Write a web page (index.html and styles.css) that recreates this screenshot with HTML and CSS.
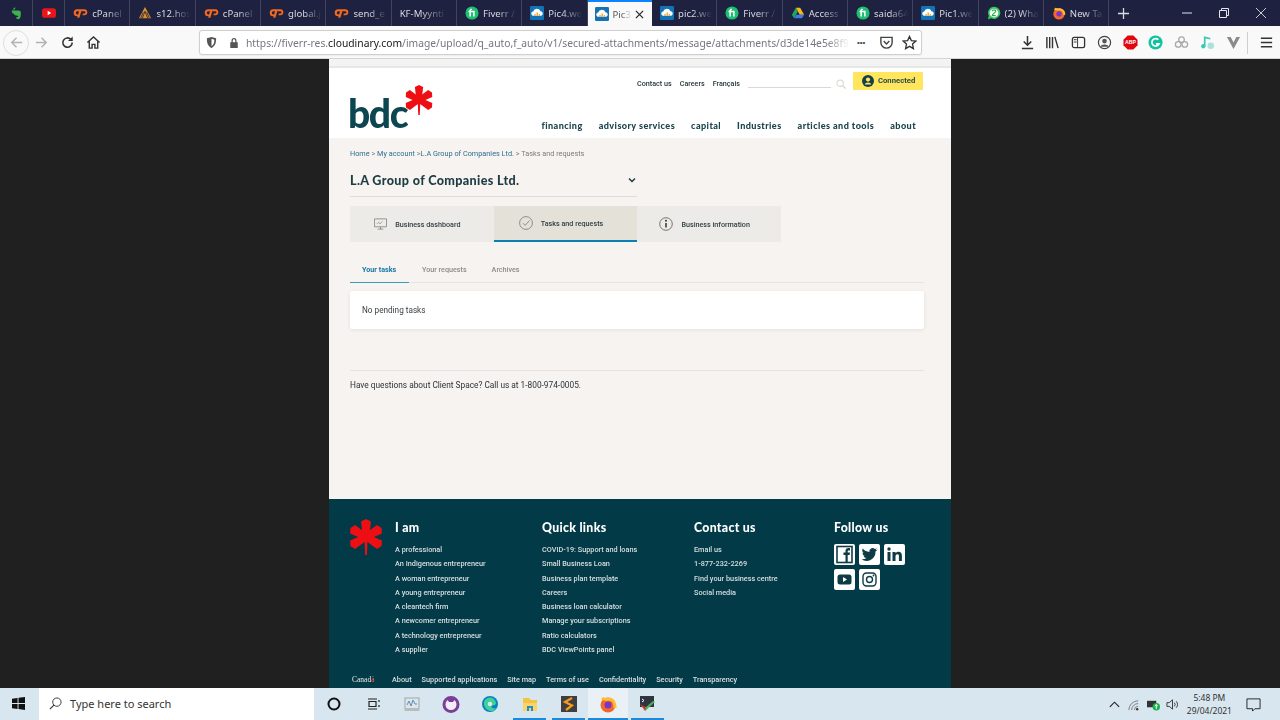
FILE: index.html
```html
<!DOCTYPE html>
<html lang="en">
<head>
<meta charset="utf-8">
<title>Client Space</title>
<link rel="stylesheet" href="styles.css">
</head>
<body>
<svg class="defs" width="0" height="0" aria-hidden="true">
  <defs>
    <symbol id="cp" viewBox="0 0 16 12"><path d="M7 2H4.500a3.600 3.600 0 0 0 0 7.500H6l.8-2H4.700a1.700 1.700 0 0 1 0-3.500H6.400L4.500 11h2.300l2.700-9zM9.500 2H12a3.200 3.200 0 0 1 0 6.500H10l.6-2h1.400a1.200 1.200 0 0 0 0-2.500H9z" fill="#f26a21"/></symbol>
    <symbol id="fv" viewBox="0 0 16 16"><circle cx="8" cy="8" r="7.500" fill="#1dbf73"/><path d="M5 12V7H4V5.500h1V5c0-1.500 1-2 2.500-2H8v1.500h-.4c-.7 0-.8.300-.8 1h4.200V12H9.300V7H6.800v5z" fill="#fff"/></symbol>
    <symbol id="pc" viewBox="0 0 16 16"><rect width="16" height="16" rx="1.500" fill="#1273b5"/><path d="M3 11a2.500 2.500 0 0 1 .6-4.800A4.500 4.500 0 0 1 12 6a2.600 2.600 0 0 1 1 5z" fill="#fff"/><path d="M5 11V9h1.500v2zM7.500 11V7.500H9V11zM10 11V9h1.300v2z" fill="#f0a020"/></symbol>
    <symbol id="star" viewBox="-16 -16 32 32">
      <g fill="#ee0f14">
        <circle r="4.500"/>
        <path d="M-2.800 0L-4.400-13.800 0-16 4.400-13.800 2.800 0z"/>
        <path transform="rotate(60)" d="M-2.800 0L-4.400-13.800 0-16 4.400-13.800 2.800 0z"/>
        <path transform="rotate(120)" d="M-2.800 0L-4.400-13.800 0-16 4.400-13.800 2.800 0z"/>
        <path transform="rotate(-60)" d="M-2.800 0L-4.400-13.800 0-16 4.400-13.800 2.800 0z"/>
        <path transform="rotate(-120)" d="M-2.800 0L-4.400-13.800 0-16 4.400-13.800 2.800 0z"/>
        <path d="M-1.500 0L-.8 16H.8L1.500 0z"/>
      </g>
    </symbol>
  </defs>
</svg>

<div class="tabstrip">
  <div class="tab tab-mini"><svg class="fav" viewBox="0 0 16 16"><path d="M4 4l3-3v3zM5 5h6c2 0 2.500 1 2.500 3 0 4-.5 7-3 7-2 0-2.500-1-2-2.500H10c.8 0 .8-1.500-.2-1.500-2 0-4-.5-4.500-2.500L4 8.500 3 5z" fill="#3fb24f"/></svg></div>
  <div class="tab tab-mini"><svg class="fav" viewBox="0 0 16 16"><rect y="2.500" width="16" height="11" rx="3" fill="#e8161b"/><path d="M6.500 5.500v5l4-2.500z" fill="#fff"/></svg></div>
  <div class="tab"><svg class="fav fav-w"><use href="#cp"/></svg><span class="tl">cPanel</span></div>
  <div class="tab"><svg class="fav" viewBox="0 0 16 16"><path d="M1 14L8 1l7 13z" fill="#e0902c"/><path d="M5 14l3-8 3 8M3 14l3-7M13 14l-3-7" stroke="#2a2a40" fill="none"/></svg><span class="tl">s12.hos</span></div>
  <div class="tab"><svg class="fav fav-w"><use href="#cp"/></svg><span class="tl">cPanel</span></div>
  <div class="tab"><svg class="fav fav-w"><use href="#cp"/></svg><span class="tl">global.j</span></div>
  <div class="tab"><svg class="fav fav-w"><use href="#cp"/></svg><span class="tl">send_e</span></div>
  <div class="tab tab-plain"><span class="tl tl-long">KF-Myynti (</span></div>
  <div class="tab"><svg class="fav"><use href="#fv"/></svg><span class="tl">Fiverr /</span></div>
  <div class="tab"><svg class="fav"><use href="#pc"/></svg><span class="tl">Pic4.we</span></div>
  <div class="tab tab-active"><svg class="fav"><use href="#pc"/></svg><span class="tl tl-short">Pic3</span><svg class="tabx" viewBox="0 0 10 10"><path d="M1 1l8 8M9 1l-8 8" stroke="#222" stroke-width="1.300"/></svg></div>
  <div class="tab"><svg class="fav"><use href="#pc"/></svg><span class="tl">pic2.we</span></div>
  <div class="tab"><svg class="fav"><use href="#fv"/></svg><span class="tl">Fiverr /</span></div>
  <div class="tab"><svg class="fav" viewBox="0 0 16 16"><path d="M5.500 2h5L15 10h-5z" fill="#f5b916"/><path d="M5.500 2L1 10l2.500 4L8 6z" fill="#1fa463"/><path d="M3.500 14h9L15 10H6z" fill="#3a7de8"/></svg><span class="tl">Access</span></div>
  <div class="tab"><svg class="fav"><use href="#fv"/></svg><span class="tl">saida64</span></div>
  <div class="tab"><svg class="fav"><use href="#pc"/></svg><span class="tl">Pic1.we</span></div>
  <div class="tab"><svg class="fav" viewBox="0 0 16 16"><path d="M1 15l1-4a7 7 0 1 1 3 3z" fill="#35c85a"/><circle cx="8" cy="8" r="5" fill="#fff"/><path d="M6 6c0-2 4-2 4 0 0 1.500-4 3-4 5h4" stroke="#2aa84a" stroke-width="1.300" fill="none"/></svg><span class="tl">(2) Wha</span></div>
  <div class="tab"><svg class="fav" viewBox="0 0 16 16"><circle cx="8" cy="9" r="6.500" fill="#f2682a"/><path d="M3 3c2 2 5 0 7 1 3 1 4 4 4 6" stroke="#ffbd2e" stroke-width="2.500" fill="none"/><circle cx="8" cy="9" r="3" fill="#7a35c9"/></svg><span class="tl">New Ta</span></div>
  <div class="newtab"><svg class="win-ic" viewBox="0 0 12 12"><path d="M6 0v12M0 6h12" stroke="#d9dae0" stroke-width="1.400"/></svg></div>
  <div class="winctl">
    <svg class="win-ic-s" viewBox="0 0 10 10"><path d="M0 5h10" stroke="#e4e4ea"/></svg>
    <svg class="win-ic-s" viewBox="0 0 10 10"><path d="M.5 2.500h7v7h-7zM2.500 2.500v-2h7v7h-2" stroke="#e4e4ea" fill="none"/></svg>
    <svg class="win-ic-s" viewBox="0 0 10 10"><path d="M0 0l10 10M10 0L0 10" stroke="#c9cad2"/></svg>
  </div>
</div>

<div class="toolbar">
  <div class="navbtns">
    <span class="backbtn"><svg class="tb" viewBox="0 0 16 16"><path d="M14 8H3M8 3L3 8l5 5" stroke="#b4b4b8" stroke-width="1.600" fill="none"/></svg></span>
    <svg class="tb fwd" viewBox="0 0 16 16"><path d="M2 8h11M8 3l5 5-5 5" stroke="#b4b4b8" stroke-width="1.600" fill="none"/></svg>
    <svg class="tb rel" viewBox="0 0 16 16"><path d="M13 8a5 5 0 1 1-1.500-3.500L13 6" stroke="#333" stroke-width="1.700" fill="none"/><path d="M13.500 1.500v5h-5z" fill="#333"/></svg>
    <svg class="tb home" viewBox="0 0 16 16"><path d="M1.500 8L8 2l6.500 6M3.500 7v7h3v-4h3v4h3V7" stroke="#333" stroke-width="1.500" fill="none"/></svg>
  </div>
  <div class="urlbar">
    <svg class="ub-shield" viewBox="0 0 14 14"><path d="M7 1l5 1.500c0 5-1 8.500-5 10.500C3 11 2 7.500 2 2.500zM7 3v8c2.300-1.500 3-3.500 3.100-7z" fill="#555" fill-rule="evenodd"/></svg>
    <span class="ub-sep"></span>
    <svg class="ub-lock" viewBox="0 0 12 14"><path d="M3 6V4a3 3 0 0 1 6 0v2h1.500v7h-9V6zm1.500 0h3V4a1.500 1.500 0 0 0-3 0z" fill="#555" fill-rule="evenodd"/></svg>
    <span class="url">https://fiverr-res.<b>cloudinary.com</b>/image/upload/q_auto,f_auto/v1/secured-attachments/message/attachments/d3de14e5e8f9</span>
    <span class="dots">•••</span>
    <svg class="tb" viewBox="0 0 16 16"><path d="M2 2.500h12V8a6 6 0 0 1-12 0z" stroke="#444" stroke-width="1.500" fill="none"/><path d="M5 6.500L8 9.500l3-3" stroke="#444" stroke-width="1.500" fill="none"/></svg>
    <svg class="tb star-ic" viewBox="0 0 16 16"><path d="M8 1.500l2 4.500 4.800.5-3.600 3.200 1 4.800L8 12.100 3.800 14.500l1-4.800L1.200 6.500 6 6z" stroke="#333" stroke-width="1.400" fill="none"/></svg>
  </div>
  <div class="tools">
    <svg class="tb" viewBox="0 0 16 16"><path d="M8 1v9M4 7l4 4 4-4M2 14.500h12" stroke="#333" stroke-width="1.600" fill="none"/></svg>
    <svg class="tb" viewBox="0 0 16 16"><path d="M2 2v12M5 2v12M8 2v12M10.500 2l3.500 12" stroke="#333" stroke-width="1.500" fill="none"/></svg>
    <svg class="tb" viewBox="0 0 16 16"><rect x="1.500" y="2.500" width="13" height="11" rx="2" stroke="#333" stroke-width="1.400" fill="none"/><path d="M3 5h3M3 7.500h3M7 3v10" stroke="#333"/></svg>
    <svg class="tb" viewBox="0 0 16 16"><circle cx="8" cy="8" r="6.500" stroke="#444" stroke-width="1.300" fill="none"/><circle cx="8" cy="6.500" r="2.500" fill="#555"/><path d="M3.500 12.500c1-3 8-3 9 0z" fill="#555"/></svg>
    <svg class="tb" viewBox="0 0 16 16"><path d="M5 .500h6L15.500 5v6L11 15.500H5L.5 11V5z" fill="#e2060f"/><text x="8" y="10" class="abp">ABP</text></svg>
    <svg class="tb" viewBox="0 0 16 16"><circle cx="8" cy="8" r="7.500" fill="#11c2a0"/><path d="M11 5a4 4 0 1 0 .8 4.500H8.500" stroke="#fff" stroke-width="1.800" fill="none"/></svg>
    <svg class="tb" viewBox="0 0 16 16"><circle cx="4.500" cy="10" r="3" stroke="#aaa" stroke-width="1.400" fill="none"/><circle cx="11.500" cy="10" r="3" stroke="#aaa" stroke-width="1.400" fill="none"/><circle cx="8" cy="5" r="3" stroke="#aaa" stroke-width="1.400" fill="none"/></svg>
    <svg class="tb" viewBox="0 0 16 16"><path d="M5 12V2.500l6 1.500" stroke="#3cc7b4" stroke-width="1.800" fill="none"/><circle cx="3.500" cy="12" r="2.300" fill="#3cc7b4"/><circle cx="11.500" cy="11.500" r="3.500" fill="#a9e3dc"/></svg>
    <svg class="tb" viewBox="0 0 16 16"><path d="M1 2h14L8 15zM5 2l3 6 3-6" fill="#8a8a8a"/></svg>
    <span class="tools-sep"></span>
    <svg class="tb" viewBox="0 0 16 16"><path d="M2 3.500h12M2 8h12M2 12.500h12" stroke="#333" stroke-width="1.600"/></svg>
  </div>
</div>

<div class="desktop">
  <main class="page">
    <div class="stripe"></div>
    <header class="head">
      <div class="head-top">
        <a>Contact us</a><a>Careers</a><a>Français</a>
        <span class="search"></span>
        <svg class="mag" viewBox="0 0 12 12"><circle cx="5" cy="5" r="3.800" stroke="#d9d6cf" stroke-width="1.300" fill="none"/><path d="M8 8l3.500 3.500" stroke="#d9d6cf" stroke-width="1.500"/></svg>
        <span class="conn"><svg class="conn-ic" viewBox="0 0 12 12"><circle cx="6" cy="6" r="6" fill="#12404a"/><circle cx="6" cy="4.600" r="2.100" fill="#ffe65c"/><path d="M2.700 9.500c.5-2.800 6.100-2.800 6.600 0z" fill="#ffe65c"/></svg>Connected</span>
      </div>
      <div class="head-main">
        <div class="logo"><span class="logo-t">bdc</span><svg class="logo-star"><use href="#star"/></svg></div>
        <nav class="nav"><a>financing</a><a>advisory services</a><a>capital</a><a>Industries</a><a>articles and tools</a><a>about</a></nav>
      </div>
    </header>

    <section class="content">
      <div class="crumbs"><a>Home</a> &gt; <a>My account</a> &gt;<a>L.A Group of Companies Ltd.</a> &gt; Tasks and requests</div>
      <div class="select"><span>L.A Group of Companies Ltd.</span><svg class="chev" viewBox="0 0 8 6"><path d="M1 1.500l3 3 3-3" stroke="#1f3a40" stroke-width="1.500" fill="none"/></svg></div>
      <div class="bigtabs">
        <div class="bigtab"><svg class="bt-ic" viewBox="0 0 14 12"><path d="M.5.500h13v8.500H.5zM7 9v2.500M4 11.500h6" stroke="#777" stroke-width=".8" fill="none"/><path d="M3 6l2-2 1.500 2L9 3" stroke="#888" stroke-width=".7" fill="none"/></svg>Business dashboard</div>
        <div class="bigtab bigtab-on"><svg class="bt-ic2" viewBox="0 0 14 14"><circle cx="7" cy="7" r="6.400" stroke="#777" stroke-width=".8" fill="none"/><path d="M4 7.200l2.200 2.200L10.500 4.500" stroke="#777" stroke-width=".8" fill="none"/></svg>Tasks and requests</div>
        <div class="bigtab"><svg class="bt-ic2" viewBox="0 0 14 14"><circle cx="7" cy="7" r="6.300" stroke="#666" stroke-width=".9" fill="none"/><path d="M7 6v4.500" stroke="#333" stroke-width="1.500"/><circle cx="7" cy="3.800" r="1" fill="#333"/></svg>Business information</div>
      </div>
      <div class="subtabs"><a class="sub sub-on">Your tasks</a><a class="sub">Your requests</a><a class="sub">Archives</a></div>
      <div class="card">No pending tasks</div>
      <p class="help">Have questions about Client Space? Call us at 1-800-974-0005.</p>
    </section>

    <footer class="foot">
      <div class="foot-grid">
        <svg class="foot-star"><use href="#star"/></svg>
        <div class="fcol fcol-1"><h3>I am</h3><a>A professional</a><a>An Indigenous entrepreneur</a><a>A woman entrepreneur</a><a>A young entrepreneur</a><a>A cleantech firm</a><a>A newcomer entrepreneur</a><a>A technology entrepreneur</a><a>A supplier</a></div>
        <div class="fcol fcol-2"><h3>Quick links</h3><a>COVID-19: Support and loans</a><a>Small Business Loan</a><a>Business plan template</a><a>Careers</a><a>Business loan calculator</a><a>Manage your subscriptions</a><a>Ratio calculators</a><a>BDC ViewPoints panel</a></div>
        <div class="fcol fcol-3"><h3>Contact us</h3><a>Email us</a><a>1-877-232-2269</a><a>Find your business centre</a><a>Social media</a></div>
        <div class="fcol"><h3>Follow us</h3>
          <div class="socials">
            <span class="soc"><svg viewBox="0 0 20 21"><rect x="2.500" y="2.500" width="15" height="16" stroke="#0d3c46" stroke-width="1.600" fill="none"/><path d="M11 18.500V11H9V8.500h2V7c0-2 1-3 3-3h1.500v2.500H14c-.6 0-.8.300-.8 1v1h2.300l-.4 2.500h-1.900v7.500z" fill="#0d3c46"/></svg></span>
            <span class="soc"><svg viewBox="0 0 20 21"><path d="M18 5.500a6 6 0 0 1-2 .6A3.200 3.200 0 0 0 17.300 4.300a6 6 0 0 1-2 .8 3.200 3.200 0 0 0-5.400 2.900A9 9 0 0 1 3.300 4.600a3.200 3.200 0 0 0 1 4.300 3 3 0 0 1-1.400-.4 3.200 3.200 0 0 0 2.500 3.200 3 3 0 0 1-1.400 0 3.200 3.200 0 0 0 3 2.200A6.500 6.500 0 0 1 2 15.300 9 9 0 0 0 16 7.400a6 6 0 0 0 2-1.900z" fill="#0d3c46"/></svg></span>
            <span class="soc"><svg viewBox="0 0 20 21"><path d="M3 8h3v9H3zM8 8h3v1.300C11.800 8.300 12.800 7.800 14 7.800c2.300 0 3.400 1.400 3.400 4V17h-3v-4.700c0-1.400-.5-2-1.500-2s-1.900.8-1.900 2V17H8z" fill="#0d3c46"/><circle cx="4.500" cy="5" r="1.700" fill="#0d3c46"/></svg></span>
            <span class="soc"><svg viewBox="0 0 20 21"><rect x="3" y="5.500" width="14" height="10" rx="2.500" fill="#0d3c46"/><path d="M8.500 8v5l4-2.500z" fill="#fff"/></svg></span>
            <span class="soc"><svg viewBox="0 0 20 21"><rect x="3.500" y="4" width="13" height="13" rx="3.500" stroke="#0d3c46" stroke-width="1.400" fill="none"/><circle cx="10" cy="10.500" r="3" stroke="#0d3c46" stroke-width="1.400" fill="none"/><circle cx="14" cy="6.500" r=".9" fill="#0d3c46"/></svg></span>
          </div>
        </div>
      </div>
      <div class="foot-bottom"><span class="canada">Canad<i>ä</i></span><a>About</a><a>Supported applications</a><a>Site map</a><a>Terms of use</a><a>Confidentiality</a><a>Security</a><a>Transparency</a></div>
    </footer>
  </main>
</div>

<div class="taskbar">
  <svg class="start" viewBox="0 0 14 14"><path d="M0 2l6-1v5.500H0zM7 .8L14 0v6.500H7zM0 7.500h6V13l-6-1zM7 7.500h7V14l-7-1z" fill="#111"/></svg>
  <div class="tsearch"><svg class="ts-ic" viewBox="0 0 14 14"><circle cx="8.500" cy="5.500" r="4.500" stroke="#333" fill="none"/><path d="M5.300 8.700L1 13" stroke="#333" stroke-width="1.200"/></svg>Type here to search</div>
  <div class="tapps">
    <span class="tapp"><svg viewBox="0 0 18 18"><circle cx="9" cy="9" r="5.500" stroke="#111" stroke-width="2" fill="none"/></svg></span>
    <span class="tapp"><svg viewBox="0 0 18 18"><path d="M4 4h9M4 14h9M5 6.500h7v5H5zM15 5v2M15 10v2" stroke="#222" stroke-width="1.200" fill="none"/></svg></span>
    <span class="tapp"><svg viewBox="0 0 18 18"><rect x="2" y="3" width="14" height="11" fill="#dfe4e8" stroke="#9aa"/><path d="M4 10l2-4 2 5 2-6 2 4h2" stroke="#5a8fc0" fill="none"/><path d="M1 16l3-3h10l3 3z" fill="#b5bbbf"/></svg></span>
    <span class="tapp"><svg viewBox="0 0 18 18"><circle cx="9" cy="9.500" r="7" stroke="#7a3d9c" stroke-width="3" fill="#f3eef6"/><path d="M5 4l2 3h4l2-3" fill="#7a3d9c"/></svg></span>
    <span class="tapp"><svg viewBox="0 0 18 18"><circle cx="9" cy="9" r="8" fill="#0b7fc4"/><path d="M3 9a6 6 0 0 1 12-1c0 2-2 2.500-5 2.500 0 2 2.500 4 6 2.500a8 8 0 0 1-4 3C7 16.500 3 13 3 9z" fill="#3ed29b"/><circle cx="9" cy="9" r="2.300" fill="#d9e6ef"/></svg></span>
    <span class="tapp tapp-run"><svg viewBox="0 0 18 18"><path d="M2 3h6l2 2h6v3H2z" fill="#f5c242"/><path d="M2 8h14v8H2z" fill="#fbd468"/><path d="M6 16v-5h6v5h-2v-3H8v3z" fill="#1a8fd6"/></svg></span>
    <span class="tapp tapp-run"><svg viewBox="0 0 18 18"><rect x="1" y="1" width="16" height="16" fill="#3f3f3f"/><path d="M12 3L5 7l7 3.500-6 4.500" stroke="#f59a23" stroke-width="2.200" fill="none"/></svg></span>
    <span class="tapp tapp-run tapp-active"><svg viewBox="0 0 18 18"><circle cx="9" cy="10" r="7.500" fill="#f2682a"/><path d="M3 3c3 3 7 0 10 2 3 2 3 5 3 8" stroke="#ffbd2e" stroke-width="3" fill="none"/><circle cx="9" cy="10" r="3.500" fill="#7a35c9"/></svg></span>
    <span class="tapp tapp-run"><svg viewBox="0 0 18 18"><rect x="2" y="1" width="14" height="11" fill="#2e3440"/><path d="M4 4l2 1.500L4 7" stroke="#fff" fill="none"/><path d="M2 9l5 7 2-3z" fill="#d9352c"/><path d="M7 16l10-9-2-1-7 6z" fill="#4caf50"/></svg></span>
  </div>
  <div class="tray">
    <svg class="tray-ic" viewBox="0 0 14 14"><path d="M2 9.500l5-5 5 5" stroke="#222" stroke-width="1.200" fill="none"/></svg>
    <svg class="tray-ic" viewBox="0 0 14 14"><path d="M2 13a10 10 0 0 1 10-10M5 13a7 7 0 0 1 7-7M8 13a4 4 0 0 1 4-4" stroke="#777" fill="none"/><circle cx="11" cy="12" r="1.300" fill="#333"/></svg>
    <svg class="tray-ic" viewBox="0 0 14 14"><rect x="0" y="3" width="10" height="7" fill="#333"/><circle cx="10" cy="9.500" r="4" fill="#18b04a"/><path d="M10 7v5M8.500 9L10 7l1.500 2" stroke="#fff" fill="none"/></svg>
    <svg class="tray-ic" viewBox="0 0 14 14"><path d="M1 5h2.500L7 2v10L3.500 9H1z" stroke="#333" fill="none"/><path d="M9 5a3 3 0 0 1 0 4M11 3.500a5 5 0 0 1 0 7" stroke="#333" fill="none"/></svg>
    <div class="clock"><span>5:48 PM</span><span>29/04/2021</span></div>
    <svg class="note" viewBox="0 0 16 16"><path d="M1 2h14v10.500H9.500L7 15v-2.500H1z" stroke="#222" fill="none"/></svg>
  </div>
</div>
</body>
</html>
```

FILE: styles.css
```css
* { box-sizing: border-box; }
html, body { margin: 0; padding: 0; }
body { width: 1280px; height: 720px; overflow: hidden; font-family: "Roboto", "Liberation Sans", sans-serif; background: #1f1f1f; display: flex; flex-direction: column; }
a { color: inherit; text-decoration: none; }
.defs { position: absolute; }

/* browser tabs */
.tabstrip { height: 26px; flex: none; background: #1f2140; display: flex; }
.tab { width: 65.300px; height: 26px; display: flex; align-items: center; gap: 4px; padding-left: 8px; border-right: 1px solid #43455f; color: #d8d9e2; font: 9.600px "Noto Sans", "Open Sans", sans-serif; overflow: hidden; flex: none; }
.tab-mini { width: 32.600px; padding-left: 9px; }
.tab-active { width: 64.500px; background: #f9f9fa; color: #555; border-right: 0; border-top: 2px solid #0a84ff; padding-left: 7px; }
.fav { width: 14px; height: 14px; flex: none; }
.fav-w { width: 15px; height: 12px; }
.tl { white-space: nowrap; -webkit-mask-image: linear-gradient(90deg, #000 40%, transparent 95%); mask-image: linear-gradient(90deg, #000 40%, transparent 95%); width: 36px; overflow: hidden; }
.tl-long { width: 50px; }
.tl-short { width: 20px; }
.tabx { width: 9px; height: 9px; margin-left: -2px; flex: none; }
.newtab { width: 28px; display: flex; align-items: center; justify-content: center; }
.win-ic { width: 11px; height: 11px; }
.winctl { margin-left: auto; display: flex; align-items: center; gap: 27px; padding-right: 14px; }
.win-ic-s { width: 10px; height: 10px; }

/* toolbar */
.toolbar { height: 33px; flex: none; background: #f9f9fa; display: flex; align-items: center; padding-top: 1px; border-bottom: 1px solid #d5d5d8; }
.navbtns { display: flex; align-items: center; width: 199px; padding-left: 3px; }
.backbtn { width: 26px; height: 26px; border: 1px solid #dedede; border-radius: 50%; display: flex; align-items: center; justify-content: center; }
.tb { width: 15px; height: 15px; flex: none; }
.fwd { margin-left: 5px; }
.rel { margin-left: 11px; }
.home { margin-left: 11px; }
.urlbar { width: 722.500px; height: 25px; background: #fff; border: 1px solid #cfcfd2; border-radius: 3px; display: flex; align-items: center; padding: 0 4px 0 5px; box-shadow: 0 1px 2px rgba(0,0,0,.06); }
.ub-shield { width: 13px; height: 13px; flex: none; }
.ub-sep { width: 1px; height: 17px; background: #ddd; margin: 0 6px 0 5px; }
.ub-lock { width: 10px; height: 12px; flex: none; }
.url { margin-left: 7px; font: 10.300px "Noto Sans", "Open Sans", sans-serif; color: #767680; white-space: nowrap; width: 604px; overflow: hidden; flex: none; -webkit-mask-image: linear-gradient(90deg, #000 96%, transparent); mask-image: linear-gradient(90deg, #000 96%, transparent); }
.url b { font-weight: 400; color: #17171a; }
.dots { margin-left: 7px; font: 8px "Liberation Sans", sans-serif; color: #444; width: 18px; flex: none; }
.url + .dots + .tb { margin-left: 4px; }
.star-ic { margin-left: 7.500px; }
.abp { font: 700 5.500px "Liberation Sans", sans-serif; fill: #fff; text-anchor: middle; }
.tools { display: flex; align-items: center; gap: 10.800px; padding-left: 98px; }
.tools-sep { width: 1px; height: 22px; background: #cfcfd2; margin: 0 0 0 -4.500px; }

/* page */
.desktop { height: 629px; flex: none; display: flex; justify-content: center; background: #202020; overflow: hidden; }
.page { width: 622px; height: 629px; background: #f6f3f1; display: flex; flex-direction: column; filter: blur(.35px); }
.stripe { height: 9px; background: #f3f3f2; border-bottom: 2px solid #e7e7e6; flex: none; }

.head { height: 70px; background: #fff; flex: none; padding: 4px 28px 0 21px; }
.head-top { display: flex; align-items: flex-start; justify-content: flex-end; font-size: 7.200px; font-weight: 500; color: #26383c; height: 19px; }
.head-top a { margin-top: 6.500px; margin-right: 8px; }
.search { width: 83px; height: 16px; border-bottom: 1px solid #ddd9d2; margin: 0 5px 0 0; }
.mag { width: 10px; height: 10px; margin: 7px 7px 0 0; flex: none; }
.conn { width: 70px; height: 18px; background: #ffe65c; display: flex; align-items: center; gap: 4px; padding: 0 0 2px 9px; font-size: 7.700px; font-weight: 700; color: #2a4a50; border-radius: 1px; }
.conn-ic { width: 12px; height: 12px; flex: none; margin-top: 2px; }
.head-main { display: flex; justify-content: space-between; align-items: flex-end; height: 47px; padding-right: 7px; }
.logo { display: flex; align-items: flex-start; height: 47px; width: 90px; flex: none; margin-left: -2px; }
.logo-t { font: 900 39px/39px "Lato", sans-serif; color: #0c4650; letter-spacing: -1.400px; margin-top: 3px; }
.logo-star { width: 30px; height: 30px; margin: -6px 0 0 -3px; flex: none; }
.nav { display: flex; gap: 16px; font: 900 9.100px/11px "Lato", sans-serif; letter-spacing: .42px; color: #1b444d; padding-bottom: 7px; white-space: nowrap; }

.content { flex: 1; padding: 10px 27px 0 21px; }
.crumbs { font-size: 7.300px; color: #7f7c78; line-height: 11px; }
.crumbs a { color: #2f6f8f; }
.select { width: 287px; height: 27px; margin-top: 11px; border-bottom: 1px solid #e1dcd5; display: flex; justify-content: space-between; align-items: center; padding: 0 1px 6px 0; font: 900 12.600px "Lato", sans-serif; color: #1f3c42; letter-spacing: .35px; }
.chev { width: 8px; height: 6px; }
.bigtabs { display: flex; width: 431px; margin-top: 9px; }
.bigtab { flex: 1; height: 36px; background: #ecebe7; display: flex; align-items: center; justify-content: center; gap: 8px; padding-right: 9px; font-size: 7.200px; font-weight: 500; color: #2f3f43; }
.bigtab-on { background: #e4e1d9; border-bottom: 2px solid #0c7fb3; }
.bt-ic { width: 13px; height: 12px; }
.bt-ic2 { width: 14px; height: 14px; }
.subtabs { display: flex; margin-top: 14px; height: 27px; border-bottom: 1px solid #e8e5e1; font-size: 7.200px; font-weight: 500; color: #8d8a85; }
.sub { padding: 9px 0 0; margin-right: 25px; }
.sub-on { width: 59px; padding-left: 12px; margin-right: 13px; color: #1779a5; font-weight: 700; border-bottom: 1px solid #3a9bb3; height: 27px; }
.card { height: 38px; margin-top: 8px; background: #fff; box-shadow: 0 1px 4px rgba(0,0,0,.08); border-radius: 2px; padding-left: 12px; display: flex; align-items: center; font-size: 8.200px; color: #3a4245; }
.help { margin: 41px 0 0; padding-top: 9px; border-top: 1px solid #e6e2dd; font-size: 8.300px; color: #2c3335; line-height: 10px; }

.foot { height: 189px; flex: none; background: #023b47; color: #d9dedf; padding: 0 0 0 21px; display: flex; flex-direction: column; }
.foot-grid { display: flex; height: 171px; padding-top: 20px; }
.foot-star { width: 36px; height: 36px; margin: 0 11px 0 -2px; flex: none; }
.fcol { display: flex; flex-direction: column; font-size: 7.300px; font-weight: 500; }
.fcol-1 { width: 147px; }
.fcol-2 { width: 152px; }
.fcol-3 { width: 140px; }
.fcol h3 { margin: 2px 0 8px; font: 900 12.300px/14px "Lato", sans-serif; color: #fff; letter-spacing: .3px; }
.fcol a { line-height: 14.290px; white-space: nowrap; }
.socials { display: flex; flex-wrap: wrap; gap: 4px; width: 72px; margin-top: 1px; }
.soc { width: 21px; height: 21px; background: #fff; border-radius: 2px; display: block; }
.soc svg { width: 21px; height: 21px; display: block; }
.foot-bottom { display: flex; align-items: center; height: 18px; font-size: 7.300px; font-weight: 500; }
.foot-bottom a { margin-right: 10px; white-space: nowrap; }
.canada { width: 42px; padding-left: 2px; font: 7.500px "Liberation Serif", serif; color: #e8e8e8; }
.canada i { font-style: normal; color: #ff6060; }

/* taskbar */
.taskbar { height: 32px; flex: none; background: #d8e6ef; display: flex; align-items: stretch; }
.start { width: 13px; height: 13px; margin: 9px 0 0 12px; flex: none; }
.tsearch { width: 275px; margin-left: 14px; background: #fff; display: flex; align-items: center; gap: 8px; padding: 0 0 1px 10px; font: 11px "Noto Sans", "Open Sans", sans-serif; color: #333; flex: none; }
.ts-ic { width: 13px; height: 13px; }
.tapps { display: flex; }
.tapp { width: 39.200px; display: flex; align-items: center; justify-content: center; flex: none; }
.tapp svg { width: 18px; height: 18px; }
.tapp-run { box-shadow: inset 0 -2px 0 #1e88d9; margin: 0 3px; width: 33.200px; }
.tapp-active { background: #eaf1f6; margin: 0; width: 39.200px; }
.tray { margin-left: auto; display: flex; align-items: center; padding-right: 19px; }
.tray-ic { width: 13px; height: 13px; margin-right: 6.500px; flex: none; }
.clock { display: flex; flex-direction: column; align-items: center; font: 8.500px/13px "Noto Sans", sans-serif; color: #333; margin: 0 14px 0 1px; }
.note { width: 15px; height: 15px; }
```
